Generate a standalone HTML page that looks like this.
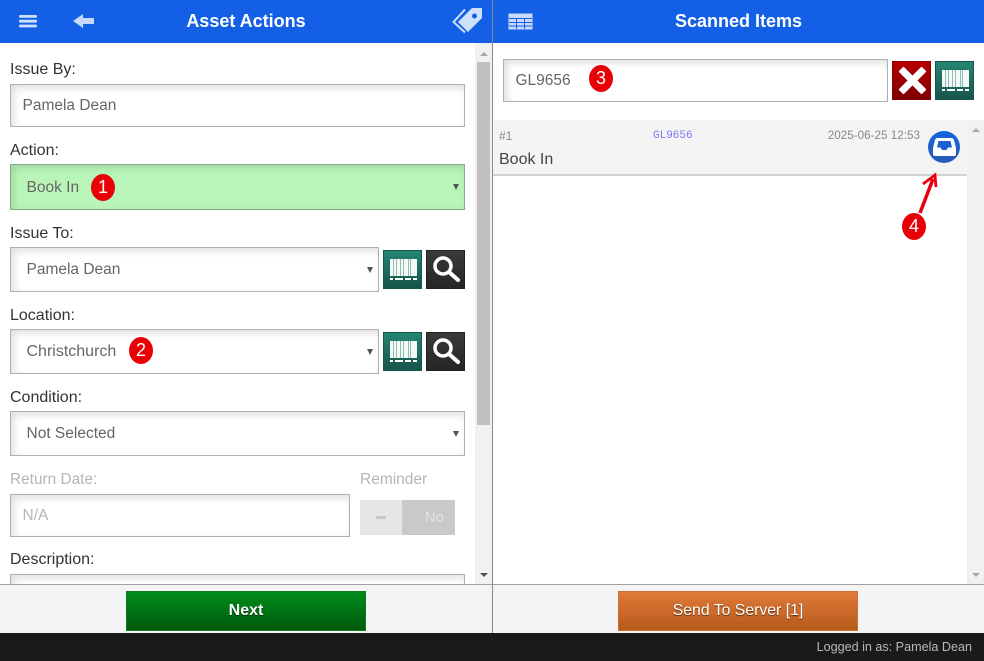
<!DOCTYPE html>
<html><head><meta charset="utf-8"><style>
html,body{margin:0;padding:0;background:#fff}
body{width:984px;height:661px;position:relative;overflow:hidden;font-family:"Liberation Sans",sans-serif;font-size:16px;color:#333}
div,svg,span{position:absolute;box-sizing:border-box}
.lb{white-space:nowrap;line-height:20px;height:20px;color:#333}
.in{background:#fff;border:1px solid #b0b0b0;box-shadow:inset 3px 3px 8px rgba(0,0,0,.13);color:#666;white-space:nowrap;font-size:15.5px}
.in span{left:11.500px;top:50%;transform:translateY(-50%)}
.sel span{left:15.500px}
.arr{width:0;height:0;border-left:3.500px solid transparent;border-right:3.500px solid transparent;border-top:6px solid #555;right:5.500px;top:50%;margin-top:-3px}
.bt{width:39px;height:39px}
.bc{background:linear-gradient(#258573,#17544a);border:1px solid #14564a}
.mg{background:linear-gradient(#3a3a3a,#262626);border:1px solid #222}
.bd{width:24px;height:27px;border-radius:50%;background:#e80006;color:#fff;text-align:center;line-height:27px;font-size:18px}
.hd{left:0;top:0;height:43px;background:#135fe5}
.tt{color:#fff;font-weight:bold;font-size:18px;line-height:43px;top:0;text-align:center;white-space:nowrap}
.go{height:40px;width:240px;top:591px;color:#fff;text-align:center;line-height:38px;font-size:15.800px;text-shadow:0 1px 1px rgba(0,0,0,.6)}
</style></head><body>

<div class="hd" style="width:492px"></div>
<div class="hd" style="left:493px;width:491px"></div>
<div style="left:492px;top:0;width:1px;height:633px;background:#8a8a8a"></div>

<svg style="left:19px;top:13px" width="18" height="16"><g fill="#cfe0fb"><rect width="18" height="2.800" y="2" rx="1"/><rect width="18" height="2.800" y="6.800" rx="1"/><rect width="18" height="2.800" y="11.600" rx="1"/></g></svg>
<svg style="left:73px;top:13px" width="22" height="16"><path d="M0 8 L10 1 V5 H21 V11 H10 V15Z" fill="#c4d9fb"/></svg>
<div class="tt" style="left:0;width:492px">Asset Actions</div>
<svg style="left:450px;top:7px" width="34" height="27"><path d="M15 2.500L3.500 15L15 25.500" stroke="#cfe0fb" stroke-width="2" fill="none"/><path d="M32 1H22L8 15L18 25L32 11Z" fill="#cfe0fb"/><circle cx="24.500" cy="9" r="2.500" fill="#135fe5"/></svg>
<svg style="left:508px;top:13px" width="25" height="17"><rect x=".5" y=".5" width="24" height="16" fill="#c8dafa"/><g stroke="#135fe5" stroke-width="1"><path d="M1 5.500H24M1 9.500H24M1 13H24M8.500 5V16M16.500 5V16"/></g></svg>
<div class="tt" style="left:493px;width:491px">Scanned Items</div>

<div class="lb" style="left:10px;top:60px">Issue By:</div>
<div class="in" style="left:10px;top:84px;width:455px;height:43px"><span>Pamela Dean</span></div>
<div class="lb" style="left:10px;top:141px">Action:</div>
<div class="in sel" style="left:10px;top:164px;width:455px;height:46px;background:#b9f5b9;border-color:#86ad86"><span style="margin-top:1px">Book In</span><div class="arr"></div></div>
<div class="bd" style="left:91px;top:174px">1</div>

<div class="lb" style="left:10px;top:224px">Issue To:</div>
<div class="in sel" style="left:10px;top:247px;width:369px;height:45px"><span>Pamela Dean</span><div class="arr"></div></div>
<div class="bt bc" style="left:383px;top:250px"><svg style="left:6px;top:7px" width="28" height="23"><rect y="1" width="27" height="17" fill="#f4f8f7"/><path d="M3.500 1v17M6.500 1v17M10.500 1v17M13.500 1v17M18.500 1v17M20.500 1v17" stroke="#8fbdb5" stroke-width="1"/><g fill="#fff"><path d="M0 20h3v2H0zM5 20h8v2H5zM15 20h6v2h-6zM23 20h4v2h-4z"/></g></svg></div>
<div class="bt mg" style="left:426px;top:250px"><svg style="left:5px;top:5px" width="29" height="29"><circle cx="11" cy="10" r="8" fill="none" stroke="#fff" stroke-width="3.500"/><path d="M17 16L26 24" stroke="#fff" stroke-width="4" stroke-linecap="round"/></svg></div>

<div class="lb" style="left:10px;top:306px">Location:</div>
<div class="in sel" style="left:10px;top:329px;width:369px;height:45px"><span style="font-size:16px">Christchurch</span><div class="arr"></div></div>
<div class="bd" style="left:129px;top:337px">2</div>
<div class="bt bc" style="left:383px;top:332px"><svg style="left:6px;top:7px" width="28" height="23"><rect y="1" width="27" height="17" fill="#f4f8f7"/><path d="M3.500 1v17M6.500 1v17M10.500 1v17M13.500 1v17M18.500 1v17M20.500 1v17" stroke="#8fbdb5" stroke-width="1"/><g fill="#fff"><path d="M0 20h3v2H0zM5 20h8v2H5zM15 20h6v2h-6zM23 20h4v2h-4z"/></g></svg></div>
<div class="bt mg" style="left:426px;top:332px"><svg style="left:5px;top:5px" width="29" height="29"><circle cx="11" cy="10" r="8" fill="none" stroke="#fff" stroke-width="3.500"/><path d="M17 16L26 24" stroke="#fff" stroke-width="4" stroke-linecap="round"/></svg></div>

<div class="lb" style="left:10px;top:388px">Condition:</div>
<div class="in sel" style="left:10px;top:411px;width:455px;height:45px"><span>Not Selected</span><div class="arr"></div></div>

<div class="lb" style="left:10px;top:470px;color:#b5b5b5;font-size:15.400px">Return Date:</div>
<div class="in" style="left:10px;top:494px;width:340px;height:43px;color:#b5b5b5"><span>N/A</span></div>
<div class="lb" style="left:360px;top:470px;color:#b5b5b5;font-size:15.500px">Reminder</div>
<div style="left:360px;top:500px;width:42px;height:35px;background:#e6e6e6"></div>
<div style="left:376px;top:516px;width:10px;height:3px;background:#c8c8c8"></div>
<div style="left:402px;top:500px;width:53px;height:35px;background:#c9c9c9;color:#e4e4e4;line-height:35px;text-align:right;padding-right:11px;font-size:15px">No</div>

<div class="lb" style="left:10px;top:550px">Description:</div>
<div class="in" style="left:10px;top:574px;width:455px;height:20px"></div>

<div style="left:475px;top:43px;width:17px;height:541px;background:#f1f1f1"></div>
<div style="left:477px;top:62px;width:13px;height:363px;background:#c1c1c1"></div>
<div style="left:480px;top:52px;width:0;height:0;border-left:4px solid transparent;border-right:4px solid transparent;border-bottom:4px solid #a8a8a8"></div>
<div style="left:480px;top:573px;width:0;height:0;border-left:4px solid transparent;border-right:4px solid transparent;border-top:4px solid #505050"></div>

<div class="in" style="left:503px;top:59px;width:385px;height:43px"><span>GL9656</span></div>
<div class="bd" style="left:589px;top:65px">3</div>
<div class="bt" style="left:892px;top:61px;background:linear-gradient(#b80000,#7c0000);border:1px solid #8a0000"><svg style="left:6px;top:5px" width="27" height="27"><path d="M2 2L25 25M25 2L2 25" stroke="#fff" stroke-width="7"/></svg></div>
<div class="bt bc" style="left:935px;top:61px"><svg style="left:6px;top:7px" width="28" height="23"><rect y="1" width="27" height="17" fill="#f4f8f7"/><path d="M3.500 1v17M6.500 1v17M10.500 1v17M13.500 1v17M18.500 1v17M20.500 1v17" stroke="#8fbdb5" stroke-width="1"/><g fill="#fff"><path d="M0 20h3v2H0zM5 20h8v2H5zM15 20h6v2h-6zM23 20h4v2h-4z"/></g></svg></div>

<div style="left:493px;top:120px;width:474px;height:56px;background:#f4f4f4;border-bottom:2px solid #d2d2d2"></div>
<div class="lb" style="left:499px;top:126px;font-size:12px;color:#888">#1</div>
<div class="lb" style="left:653px;top:126px;font-size:11px;color:#7a7af5;font-family:'Liberation Mono',monospace">GL9656</div>
<div class="lb" style="right:64px;top:126px;font-size:11.700px;color:#888">2025-06-25 12:53</div>
<div class="lb" style="left:499px;top:148px;color:#444;margin-top:2px">Book In</div>
<div style="left:928px;top:131px;width:32px;height:32px;border-radius:50%;background:linear-gradient(#1266de,#2a5bb5)"></div>
<svg style="left:928px;top:131px" width="32" height="32"><path d="M9 7H23Q25 7 26 9L28 17V23Q28 25 26 25H7Q5 25 5 23V17L7 9Q8 7 9 7Z" fill="#fff"/><path d="M10.500 10H22.500L24 16.500H20L18.500 19H14L12.500 16.500H9Z" fill="#1a60cf"/></svg>

<div style="left:967px;top:120px;width:17px;height:464px;background:#f1f1f1"></div>
<div style="left:972px;top:128px;width:0;height:0;border-left:4px solid transparent;border-right:4px solid transparent;border-bottom:4px solid #a8a8a8"></div>
<div style="left:972px;top:573px;width:0;height:0;border-left:4px solid transparent;border-right:4px solid transparent;border-top:4px solid #a8a8a8"></div>

<svg style="left:900px;top:170px" width="50" height="50"><path d="M20 43L33 9" stroke="#e8000c" stroke-width="3.500" fill="none"/><path d="M23 14L35 5L36 17" stroke="#e8000c" stroke-width="2.800" fill="none"/></svg>
<div class="bd" style="left:902px;top:213px">4</div>

<div style="left:0;top:584px;width:492px;height:49px;background:#f4f4f4;border-top:1px solid #a0a0a0"></div>
<div style="left:493px;top:584px;width:491px;height:49px;background:#f4f4f4;border-top:1px solid #a0a0a0"></div>
<div style="left:492px;top:584px;width:1px;height:49px;background:#8a8a8a"></div>
<div class="go" style="left:126px;background:linear-gradient(#008c1c,#005a0c);border:1px solid #0a7a1c;font-weight:bold;font-size:16px">Next</div>
<div class="go" style="left:618px;background:linear-gradient(#df7a3a,#b85a1a);border:1px solid #d0702f">Send To Server [1]</div>

<div style="left:0;top:633px;width:984px;height:28px;background:#1a1a1a"></div>
<div class="lb" style="right:12px;top:637px;font-size:12.600px;color:#b8b8b8">Logged in as: Pamela Dean</div>
</body></html>
